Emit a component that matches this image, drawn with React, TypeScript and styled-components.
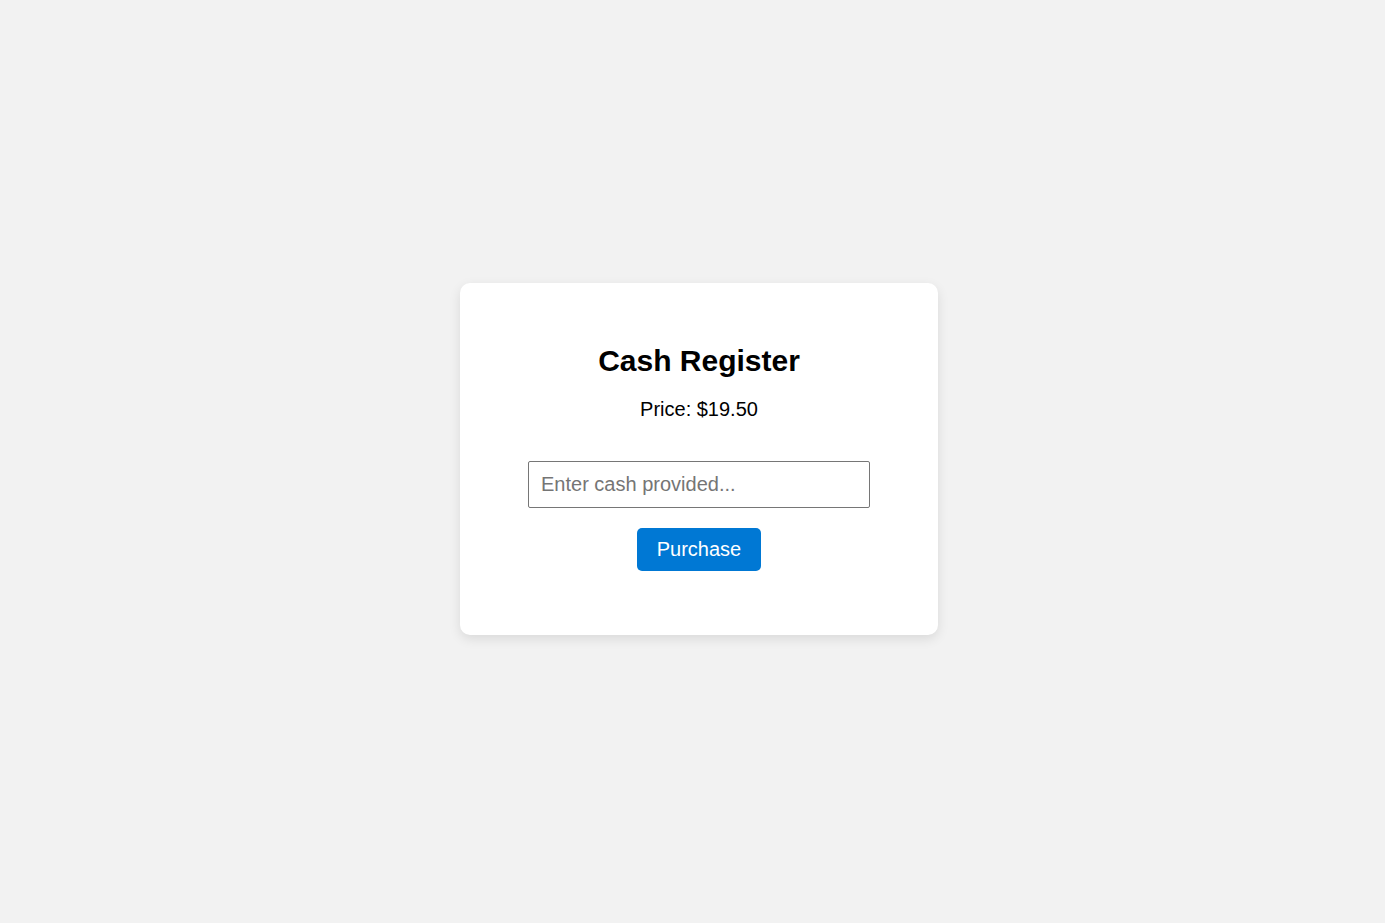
import React, { useState } from 'react';
import styled, { createGlobalStyle } from 'styled-components';

const GlobalStyle = createGlobalStyle`
  html, body {
    margin: 0;
    padding: 0;
    background-color: #f2f2f2;
    font-family: "Liberation Sans", Arial, sans-serif;
  }
`;

const Page = styled.div`
  display: flex;
  justify-content: center;
  align-items: center;
  min-height: 100vh;
  box-sizing: border-box;
  padding: 0 0 5px 13px;
`;

const Card = styled.div`
  display: flex;
  flex-direction: column;
  align-items: center;
  width: 478px;
  box-sizing: border-box;
  padding: 40px 40px 64px;
  background-color: #fff;
  border-radius: 10px;
  box-shadow: 0 4px 12px rgba(0, 0, 0, 0.1);
`;

const Title = styled.h1`
  margin: 21px 0 20px;
  font-size: 30px;
  font-weight: bold;
  color: #000;
`;

const Price = styled.p`
  margin: 0 0 39.5px;
  font-size: 20px;
  color: #000;
`;

const CashInput = styled.input`
  width: 342px;
  height: 47px;
  box-sizing: border-box;
  padding: 0 12px;
  margin: 0 0 20px;
  font-family: "Liberation Sans", Arial, sans-serif;
  font-size: 20px;
  color: #000;
  border: 1px solid #767676;
  border-radius: 2px;
  background: #fff;
  outline: none;

  &::placeholder {
    color: #757575;
  }
`;

const PurchaseButton = styled.button`
  height: 43px;
  padding: 0 20px;
  font-family: "Liberation Sans", Arial, sans-serif;
  font-size: 20px;
  color: #fff;
  background-color: #0078d4;
  border: none;
  border-radius: 5px;
  cursor: pointer;
`;

const App: React.FC = () => {
  const [cash, setCash] = useState('');

  return (
    <>
      <GlobalStyle />
      <Page>
        <Card>
          <Title>Cash Register</Title>
          <Price>Price: $19.50</Price>
          <CashInput
            type="text"
            placeholder="Enter cash provided..."
            value={cash}
            onChange={e => setCash(e.target.value)}
          />
          <PurchaseButton>Purchase</PurchaseButton>
        </Card>
      </Page>
    </>
  );
};

export default App;
